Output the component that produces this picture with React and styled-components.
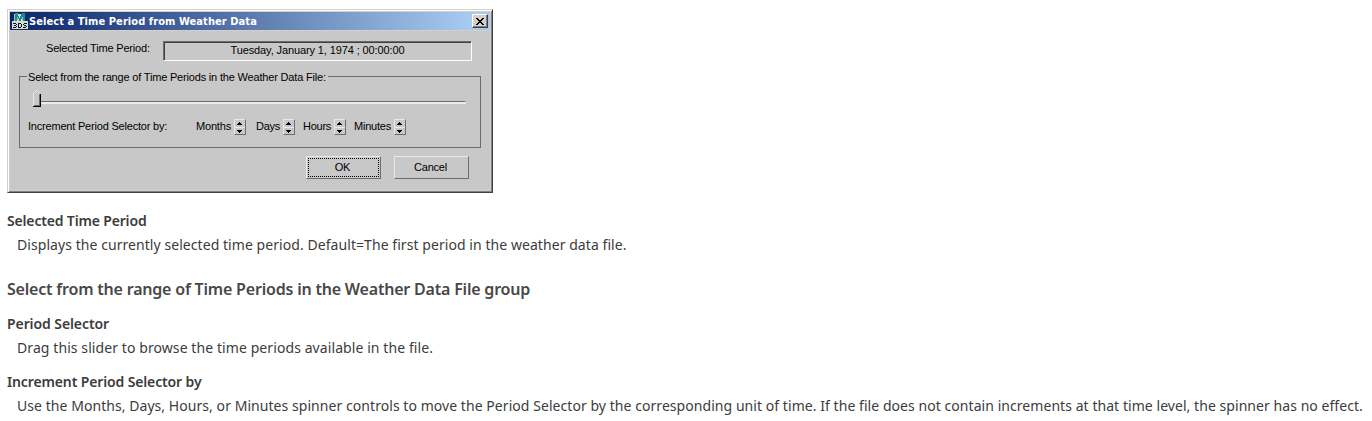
import React from 'react';
import styled, { createGlobalStyle, css } from 'styled-components';

const GlobalStyle = createGlobalStyle`
  * { box-sizing: border-box; }
  body { margin: 0; background: #fff; overflow: hidden; }
`;

const Page = styled.main`
  display: flex;
  flex-direction: column;
  align-items: flex-start;
  padding: 9px 0 0 7px;
  height: 421px;
  font-family: 'Noto Sans', sans-serif;
  font-size: 14px;
  color: #3c3c3c;
  white-space: nowrap;
`;

const Text = styled.span`
  letter-spacing: ${(p) => p.$spacing}px;
`;

/* Dialog window */
const Dialog = styled.section`
  width: 486px;
  height: 184px;
  background: #c8c8c8;
  border: 1px solid;
  border-color: #d4d0c8 #404040 #404040 #d4d0c8;
  box-shadow: inset 1px 1px #fff, inset -1px -1px #808080, inset 2px 2px #d4d0c8, inset -2px -2px #d4d0c8;
  padding: 2px;
  font: 11px/13px 'Liberation Sans', Arial, sans-serif;
  color: #000;
`;

const TitleBar = styled.header`
  display: flex;
  align-items: center;
  height: 18px;
  padding: 0 2px;
  background: linear-gradient(90deg, #0a246a, #a6caf0 96%);
  box-shadow: 0 1px #d4d0c8;
  color: #fff;
`;

const Title = styled.h1`
  flex: 1;
  margin: 1px 0 0 1px;
  font: bold 11px/16px 'DejaVu Sans Condensed', 'DejaVu Sans', sans-serif;
  font-stretch: condensed;
`;

const raised = css`
  background: #c8c8c8;
  border: 1px solid;
  border-color: #e8e8e8 #6c6c6c #6c6c6c #e8e8e8;
`;

const CloseButton = styled.button`
  display: flex;
  align-items: center;
  justify-content: center;
  width: 16px;
  height: 14px;
  padding: 0;
  background: #d4d0c8;
  border: 1px solid;
  border-color: #fff #404040 #404040 #fff;
  box-shadow: inset -1px -1px #808080;
`;

const Body = styled.div`
  display: flex;
  flex-direction: column;
  padding: 11px 8px 0 9px;
`;

const FieldRow = styled.div`
  display: flex;
  padding-left: 27px;
`;

const FieldLabel = styled.label`
  width: 117px;
  padding-top: 1px;
`;

const ReadOnlyField = styled.output`
  width: 309px;
  height: 20px;
  border: 1px solid;
  border-color: #6c6c6c #fff #fff #6c6c6c;
  box-shadow: inset 1px 1px #404040;
  padding: 2px 0 0;
  text-align: center;
`;

const Group = styled.fieldset`
  display: block;
  height: 78px;
  margin: 9px 0 0;
  padding: 0 0 0 8px;
  width: 462px;
  min-width: 0;
  border: 1px solid #6c6c6c;
`;

const Legend = styled.legend`
  padding: 0 1px;
  margin-left: -1px;
  width: 301px;
  height: 13px;
  line-height: 15px;
`;

const Slider = styled.div`
  display: flex;
  margin: 7px 0 0 5px;
  height: 17px;
`;

const Track = styled.div`
  width: 425px;
  height: 3px;
  margin-top: 11px;
  background: #ececec;
  border-top: 1px solid #6c6c6c;
  border-right: 1px solid #ececec;
`;

const IncrementRow = styled.div`
  display: flex;
  align-items: flex-start;
  margin-top: 12px;
`;

const IncrementLabel = styled.span`
  width: 168px;
  padding-top: 1px;
`;

const SpinnerField = styled.div`
  display: flex;
  width: ${(p) => p.$width}px;
  margin-right: ${(p) => p.$gap}px;
  justify-content: space-between;
  line-height: 15px;
`;

const SpinnerButtons = styled.div`
  ${raised}
  display: grid;
  grid-template-rows: 7px 7px;
  width: 12px;
  height: 16px;
`;

const SpinnerButton = styled.button`
  display: flex;
  align-items: flex-start;
  justify-content: center;
  padding: 2px 0 0;
  background: none;
  border: 0 solid #e8e8e8;
  border-top-width: ${(p) => (p.$divided ? 1 : 0)}px;
`;

const Actions = styled.div`
  display: flex;
  gap: 13px;
  margin: 8px 0 0 287px;
`;

const Button = styled.button`
  ${raised}
  width: 75px;
  height: 23px;
  padding: 1px;
  font: inherit;
  color: #000;
`;

const ButtonFace = styled.span`
  display: block;
  height: 19px;
  padding-right: 2px;
  border: 1px dotted ${(p) => (p.$focused ? '#000' : 'transparent')};
  line-height: 17px;
`;

/* Documentation */
const Docs = styled.dl`
  margin: ${(p) => p.$top}px 0 0;
  line-height: 24px;
`;

const Term = styled.dt`
  font-weight: 600;
  height: 24px;
  margin-top: ${(p) => p.$top || 0}px;
`;

const Description = styled.dd`
  margin: 0 0 0 10px;
  height: 24px;
`;

const Heading = styled.h2`
  margin: 20px 0 0;
  height: 25px;
  font-size: 16px;
  line-height: 25px;
  font-weight: 600;
  color: #484848;
`;

const AppIcon = () => (
  <svg width="16" height="16" viewBox="0 0 16 16" shapeRendering="crispEdges">
    <path fill="#d8dcd8" d="M2 1h11v7h3v8H0V8h2z" />
    <path fill="#1c8c84" d="M3 0h2v1h1v2h1v2h1V3h1V1h1V0h3v8h-2V4h-1v2H9v2H7V6H6V4H5v4H3z" />
    <path fill="#8cc4be" d="M5 0h1v1H5zM2 2h1v6H2zM5 4h1v3H5zM10 4h1v3h-1z" />
    <g fill="#101010">
      <path d="M1 10h3v1H1zM2 12h2v1H2zM1 14h3v1H1zM4 11h1v1H4zM4 13h1v1H4z" />
      <path d="M6 10h3v1H7v3h2v1H6zM9 11h1v3H9z" />
      <path d="M12 10h3v1h-3zM11 11h1v1h-1zM12 12h2v1h-2zM14 13h1v1h-1zM11 14h3v1h-3z" />
    </g>
  </svg>
);

const CloseIcon = () => (
  <svg width="8" height="7" viewBox="0 0 8 7" shapeRendering="crispEdges">
    <path d="M0 0h2v1h1v1h2V1h1V0h2v1H7v1H6v1H5v1h1v1h1v1h1v1H6V6H5V5H3v1H2v1H0V6h1V5h1V4h1V3H2V2H1V1H0z" />
  </svg>
);

const Thumb = () => (
  <svg width="8" height="17" viewBox="0 0 8 17" shapeRendering="crispEdges">
    <path fill="#c8c8c8" d="M1 4l3-3 3 3v12H1z" />
    <path fill="#e8e8e8" d="M3 0h1v1H3zM2 1h1v1H2zM4 1h1v1H4zM1 2h1v1H1zM5 2h1v1H5zM0 3h1v13H0zM6 3h1v1H6z" />
    <path fill="#6c6c6c" d="M6 4h1v11H6zM1 15h6v1H1z" />
    <path fill="#000" d="M7 4h1v13H0v-1h7z" />
  </svg>
);

const Arrow = ({ down }) => (
  <svg width="6" height="3" viewBox="0 0 6 3" shapeRendering="crispEdges">
    <path d={down ? 'M0 0h5v1H4v1H3v1H2V2H1V1H0z' : 'M2 0h1v1h1v1h1v1H0V2h1V1h1z'} />
  </svg>
);

const Spinner = ({ label, spacing, width, gap }) => (
  <SpinnerField $width={width} $gap={gap}>
    <Text $spacing={spacing}>{label}</Text>
    <SpinnerButtons>
      <SpinnerButton aria-label={`${label} up`}><Arrow /></SpinnerButton>
      <SpinnerButton $divided aria-label={`${label} down`}><Arrow down /></SpinnerButton>
    </SpinnerButtons>
  </SpinnerField>
);

export default function App() {
  return (
    <Page>
      <GlobalStyle />
      <Dialog>
        <TitleBar>
          <AppIcon />
          <Title><Text $spacing={0.075}>Select a Time Period from Weather Data</Text></Title>
          <CloseButton aria-label="Close"><CloseIcon /></CloseButton>
        </TitleBar>
        <Body>
          <FieldRow>
            <FieldLabel><Text $spacing={-0.18}>Selected Time Period:</Text></FieldLabel>
            <ReadOnlyField><Text $spacing={-0.115}>Tuesday, January 1, 1974 ; 00:00:00</Text></ReadOnlyField>
          </FieldRow>
          <Group>
            <Legend><Text $spacing={-0.18}>Select from the range of Time Periods in the Weather Data File:</Text></Legend>
            <Slider><Thumb /><Track /></Slider>
            <IncrementRow>
              <IncrementLabel><Text $spacing={-0.2}>Increment Period Selector by:</Text></IncrementLabel>
              <Spinner label="Months" spacing={-0.18} width={50} gap={10} />
              <Spinner label="Days" spacing={-0.25} width={39} gap={8} />
              <Spinner label="Hours" spacing={-0.25} width={43} gap={8} />
              <Spinner label="Minutes" spacing={-0.21} width={52} gap={0} />
            </IncrementRow>
          </Group>
          <Actions>
            <Button><ButtonFace $focused><Text $spacing={-0.3}>OK</Text></ButtonFace></Button>
            <Button><ButtonFace><Text $spacing={-0.2}>Cancel</Text></ButtonFace></Button>
          </Actions>
        </Body>
      </Dialog>
      <Docs $top={16}>
        <Term><Text $spacing={-0.165}>Selected Time Period</Text></Term>
        <Description><Text $spacing={0.062}>Displays the currently selected time period. Default=The first period in the weather data file.</Text></Description>
      </Docs>
      <Heading><Text $spacing={-0.2}>Select from the range of Time Periods in the Weather Data File group</Text></Heading>
      <Docs $top={10}>
        <Term><Text $spacing={-0.087}>Period Selector</Text></Term>
        <Description><Text $spacing={0.085}>Drag this slider to browse the time periods available in the file.</Text></Description>
        <Term $top={10}><Text $spacing={-0.132}>Increment Period Selector by</Text></Term>
        <Description><Text $spacing={0.055}>Use the Months, Days, Hours, or Minutes spinner controls to move the Period Selector by the corresponding unit of time. If the file does not contain increments at that time level, the spinner has no effect.</Text></Description>
      </Docs>
    </Page>
  );
}
